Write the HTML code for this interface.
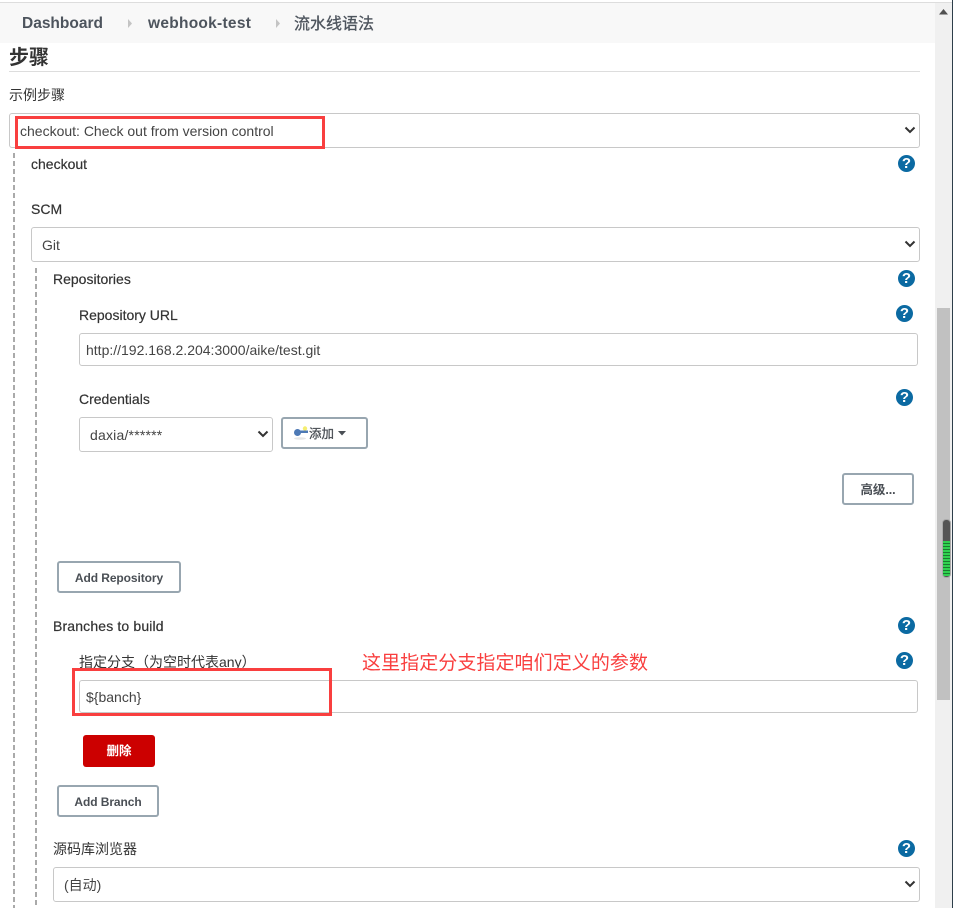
<!DOCTYPE html>
<html lang="zh">
<head>
<meta charset="utf-8">
<style>
html,body{margin:0;padding:0;background:#fff;}
body{width:953px;height:908px;position:relative;overflow:hidden;font-family:"Liberation Sans","Noto Sans CJK SC",sans-serif;font-size:14px;color:#333;}
.a{position:absolute;white-space:nowrap;}
.l{position:absolute;white-space:nowrap;height:18px;line-height:18px;color:#333;-webkit-text-stroke:.2px #333;}
.box{position:absolute;box-sizing:border-box;background:#fff;border:1px solid #c8c8c8;border-radius:3px;color:#444;line-height:normal;white-space:nowrap;display:flex;align-items:center;}
.box span{position:relative;top:0;}
.btn{position:absolute;box-sizing:border-box;background:#fff;border:2px solid #98a6b0;border-radius:3px;color:#4a4f55;font-weight:bold;font-size:12px;letter-spacing:-.08px;text-align:center;white-space:nowrap;}
.dash{position:absolute;width:2px;background:repeating-linear-gradient(#aaa 0 5px,transparent 5px 8px);}
.q{position:absolute;width:17px;height:17px;border-radius:50%;background:#0b6aa2;color:#fff;font-weight:bold;font-size:15px;line-height:17px;text-align:center;}
svg{position:absolute;display:block;}
</style>
</head>
<body>
<div class="a" style="left:0;top:2px;width:953px;height:1px;background:#ddd"></div>
<div class="a" style="left:0;top:3px;width:935px;height:40px;background:#f8f8f8"></div>
<div class="a" style="left:22px;top:14px;font-size:15.5px;font-weight:bold;color:#4d545d;line-height:20px">Dashboard</div>
<svg style="left:127px;top:18px" width="6" height="11"><path d="M1 1L5 5.5L1 10Z" fill="#c4c4c4"/></svg>
<div class="a" style="left:148px;top:14px;font-size:15.5px;font-weight:bold;color:#4d545d;line-height:20px;letter-spacing:.27px">webhook-test</div>
<svg style="left:275px;top:18px" width="6" height="11"><path d="M1 1L5 5.5L1 10Z" fill="#c4c4c4"/></svg>
<div class="a" style="left:294px;top:14px;font-size:16px;color:#4d545d;line-height:22px;-webkit-text-stroke:.3px #4d545d">流水线语法</div>

<div class="a" style="left:9px;top:45px;font-size:20px;font-weight:bold;color:#333;line-height:27px">步骤</div>
<div class="a" style="left:9px;top:71px;width:911px;height:1px;background:#ddd"></div>
<div class="a" style="left:9px;top:86px;line-height:18px;font-size:14px">示例步骤</div>

<div class="box" style="left:9px;top:113px;width:911px;height:35px;padding-left:10px"><span>checkout: Check out from version control</span></div>
<svg style="left:904px;top:126px" width="12" height="9"><path d="M1.5 1.5L6 6L10.500 1.500" fill="none" stroke="#333" stroke-width="2"/></svg>

<div class="dash" style="left:13px;top:153px;height:755px"></div>
<div class="l" style="left:31px;top:155px">checkout</div>
<div class="l" style="left:31px;top:200px">SCM</div>

<div class="box" style="left:31px;top:227px;width:889px;height:35px;padding-left:10px"><span>Git</span></div>
<svg style="left:904px;top:240px" width="12" height="9"><path d="M1.5 1.5L6 6L10.500 1.500" fill="none" stroke="#333" stroke-width="2"/></svg>

<div class="dash" style="left:35px;top:268px;height:640px"></div>
<div class="l" style="left:53px;top:270px">Repositories</div>
<div class="l" style="left:79px;top:306px">Repository URL</div>
<div class="box" style="left:79px;top:333px;width:839px;height:33px;padding-left:6px"><span>http://192.168.2.204:3000/aike/test.git</span></div>
<div class="l" style="left:79px;top:390px">Credentials</div>
<div class="box" style="left:79px;top:417px;width:194px;height:35px;padding-left:10px"><span style="letter-spacing:.2px">daxia/******</span></div>
<svg style="left:257px;top:430px" width="12" height="9"><path d="M1.5 1.5L6 6L10.500 1.500" fill="none" stroke="#333" stroke-width="2"/></svg>

<div class="btn" style="left:281px;top:417px;width:87px;height:32px"></div>
<svg style="left:293px;top:425px" width="16" height="16"><ellipse cx="7" cy="13.500" rx="6" ry="1.200" fill="#e6e6e6"/><circle cx="12" cy="3.500" r="2.200" fill="#f5ee70"/><circle cx="4.500" cy="7.500" r="3.500" fill="#4d79b5"/><rect x="6" y="5.500" width="9" height="2.500" fill="#4d79b5"/></svg>
<div class="a" style="left:309px;top:425px;font-size:12.5px;line-height:18px;color:#4a4f55;-webkit-text-stroke:.3px #4a4f55">添加</div>
<svg style="left:338px;top:431px" width="8" height="5"><path d="M0 0H8L4 4.500Z" fill="#4a4f55"/></svg>

<div class="btn" style="left:842px;top:473px;width:72px;height:32px;line-height:31px;font-size:12.5px">高级...</div>
<div class="btn" style="left:57px;top:561px;width:124px;height:32px;line-height:31px">Add Repository</div>

<div class="l" style="left:53px;top:617px;letter-spacing:.15px">Branches to build</div>
<div class="l" style="left:79px;top:653px;-webkit-text-stroke:0">指定分支（为空时代表any）</div>
<div class="a" style="left:72px;top:668px;width:260px;height:12px;background:#fff"></div>
<div class="box" style="left:79px;top:680px;width:839px;height:33px;padding-left:6px"><span>${banch}</span></div>

<div class="a" style="left:83px;top:735px;width:72px;height:32px;background:#cc0000;border-radius:3px;color:#fff;font-weight:bold;font-size:12.5px;line-height:32px;text-align:center">删除</div>
<div class="btn" style="left:57px;top:785px;width:102px;height:32px;line-height:31px">Add Branch</div>

<div class="l" style="left:53px;top:840px;-webkit-text-stroke:0">源码库浏览器</div>
<div class="box" style="left:53px;top:867px;width:867px;height:35px;padding-left:10px"><span>(自动)</span></div>
<svg style="left:904px;top:880px" width="12" height="9"><path d="M1.5 1.5L6 6L10.500 1.500" fill="none" stroke="#333" stroke-width="2"/></svg>

<div class="q" style="left:898px;top:155px">?</div>
<div class="q" style="left:898px;top:270px">?</div>
<div class="q" style="left:896px;top:305px">?</div>
<div class="q" style="left:896px;top:389px">?</div>
<div class="q" style="left:898px;top:617px">?</div>
<div class="q" style="left:896px;top:652px">?</div>
<div class="q" style="left:898px;top:840px">?</div>

<div class="a" style="left:15px;top:116px;width:310px;height:33px;box-sizing:border-box;border:3px solid #f93f3f"></div>
<div class="a" style="left:72px;top:668px;width:260px;height:48px;box-sizing:border-box;border:3px solid #f93f3f"></div>
<div class="a" style="left:362px;top:652px;font-size:19px;line-height:24px;color:#f93f3f;letter-spacing:.07px">这里指定分支指定咱们定义的参数</div>

<div class="a" style="left:935px;top:3px;width:17px;height:905px;background:#f0f0f0"></div>
<svg style="left:939px;top:9px" width="9" height="6"><path d="M0 5.500L4.500 0L9 5.500Z" fill="#505050"/></svg>
<div class="a" style="left:937px;top:308px;width:13px;height:392px;background:#c1c1c1"></div>
<div class="a" style="left:942px;top:519px;width:9px;height:59px;box-sizing:border-box;border:1px solid #aaa;border-radius:4px;background:#555;overflow:hidden"><div style="position:absolute;left:0;top:21px;width:7px;height:35px;background:repeating-linear-gradient(#2fd24f 0 2px,#1b7a30 2px 3px)"></div></div>
<div class="a" style="left:952px;top:0;width:1px;height:908px;background:#2d3e4a"></div>
</body>
</html>
